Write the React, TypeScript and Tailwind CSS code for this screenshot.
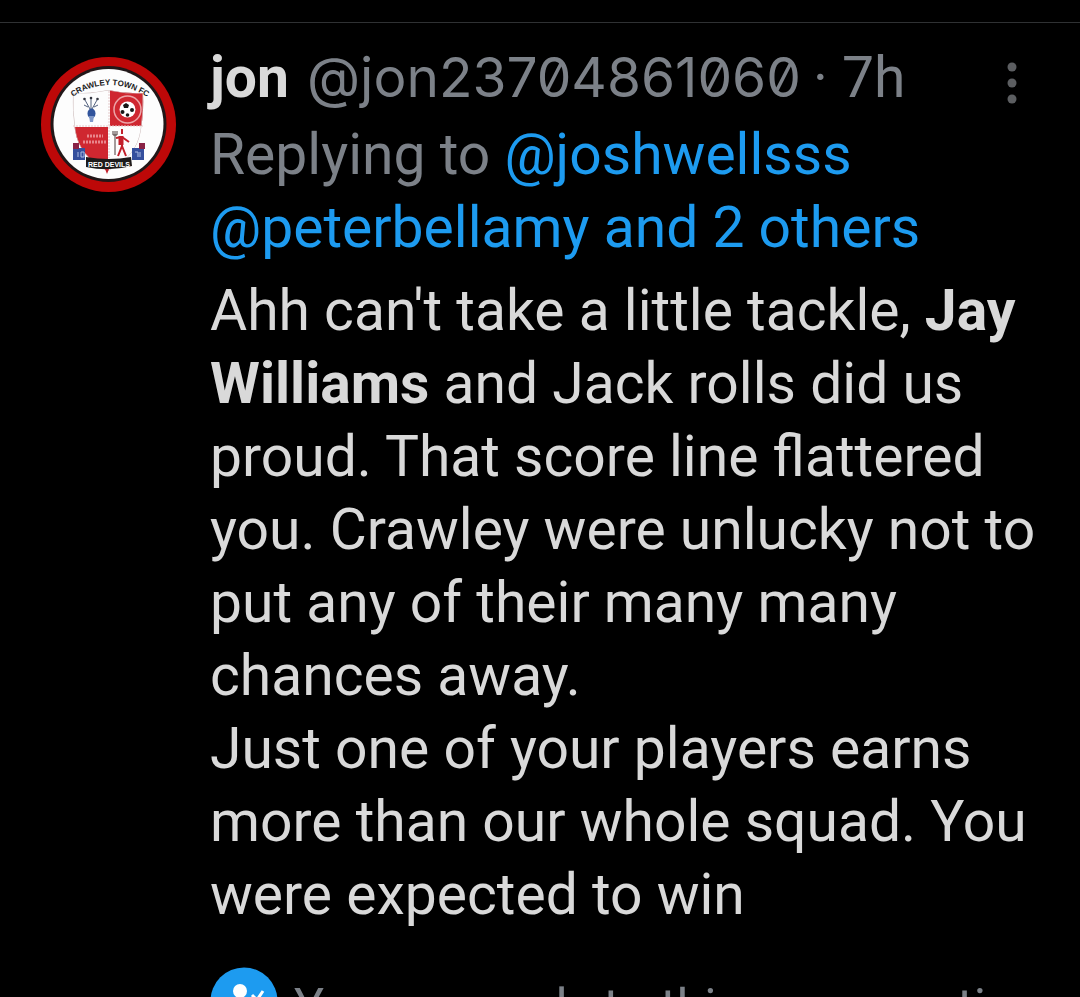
const REPLYING_TO = ['@joshwellsss', '@peterbellamy']

function ClubBadge() {
  return (
    <svg viewBox="0 0 160 160" className="h-40 w-40" role="img" aria-label="Crawley Town FC">
      <defs>
        <path id="club-arc" d="M38 55 Q79 25 122 55" />
        <clipPath id="shield">
          <path d="M43 48 Q60 49 78 45 Q96 49 113 48 Q114 65 111 85 Q107 112 78 126 Q49 112 45 85 Q42 65 43 48Z" />
        </clipPath>
      </defs>
      <circle cx="78.500" cy="79.500" r="67.500" fill="#bd0808" />
      <circle cx="78.500" cy="79" r="58" fill="#211718" />
      <circle cx="78.500" cy="79" r="55" fill="#fdfdfd" />
      <g clipPath="url(#shield)">
        <rect x="80" y="44" width="36" height="37" fill="#cf2730" />
        <rect x="42" y="82" width="36" height="48" fill="#cf2730" />
        <path d="M43 48 Q60 49 78 45 Q96 49 113 48 Q114 65 111 85 Q107 112 78 126 Q49 112 45 85 Q42 65 43 48Z" fill="none" stroke="#cdbcbc" strokeWidth="1" />
      </g>
      <path d="M43 81H113M79 46V113" stroke="#e4c9ca" strokeWidth="1" strokeDasharray="2 1" />
      <text fontSize="8" fontWeight="700" fill="#202020" className="font-['Liberation_Sans']">
        <textPath href="#club-arc" startOffset="50%" textAnchor="middle">CRAWLEY TOWN FC</textPath>
      </text>
      {/* blue crest, top left */}
      <g stroke="#53627f" strokeWidth="1" fill="none">
        <path d="M61 66L61 54M60 64L55 55M62 64L67 55M58 62L54 60M64 62L68 60" />
      </g>
      <g fill="#34363f">
        <circle cx="54.500" cy="54" r="1.300" />
        <circle cx="61" cy="53" r="1.300" />
        <circle cx="67.500" cy="54" r="1.300" />
      </g>
      <ellipse cx="61.500" cy="68.500" rx="4" ry="5" fill="#31549c" />
      <path d="M59 71h5l-1 6h-3z" fill="#7f98c8" />
      {/* football, top right */}
      <circle cx="97.500" cy="64.500" r="13.500" fill="none" stroke="#eda5a8" strokeWidth="1.500" />
      <circle cx="97.500" cy="64.500" r="8" fill="#fff" />
      <g fill="#171717">
        <path d="M93 60l3-2 3 2-1 3h-4z" />
        <circle cx="92.500" cy="67" r="2" />
        <circle cx="102" cy="65" r="2" />
        <circle cx="97.500" cy="70" r="1.800" />
      </g>
      {/* motto, bottom left */}
      <path d="M57 91H73M53 97H76" stroke="#e9868c" strokeWidth="3" strokeDasharray="2 1" />
      {/* red devil, bottom right */}
      <g fill="none" stroke="#c3202b" strokeWidth="2">
        <path d="M92 84V89M92 91V101L88 111M92 101L96 111M86 93L92 92L99 97" />
        <path d="M91 91v9" strokeWidth="5" />
      </g>
      <path d="M85 86v24M83 86v4h4v-4" fill="none" stroke="#4a3a3a" strokeWidth="1" />
      {/* ribbon */}
      <path d="M43 103h12v12H43zM102 103h12v12h-12z" fill="#354f9d" />
      <path d="M43 98h6v6h-6zM109 98h6v6h-6z" fill="#8a2346" />
      <path d="M48 107v5M51 107h3v5h-3zM105 107h3v5M110 107v5" fill="none" stroke="#aebde2" strokeWidth="1" />
      <path d="M56 112Q79 116 101 112L102 121Q79 127 56 122Z" fill="#1d1b1b" />
      <path d="M75 124h4l-2 5z" fill="#c3202b" />
      <text x="79" y="122" textAnchor="middle" fontSize="7" fontWeight="700" fill="#fff" className="font-['Liberation_Sans']">
        RED DEVILS
      </text>
    </svg>
  )
}

function MoreIcon() {
  return (
    <svg viewBox="0 0 16 48" className="h-12 w-4 fill-[#5c5e61]" aria-hidden="true">
      <circle cx="8" cy="8" r="4.500" />
      <circle cx="8" cy="24" r="4.500" />
      <circle cx="8" cy="40" r="4.500" />
    </svg>
  )
}

function CanReplyIcon() {
  return (
    <svg viewBox="0 0 68 68" className="h-17 w-17 shrink-0" aria-hidden="true">
      <circle cx="34" cy="34" r="33.500" fill="#1d9bf0" />
      <circle cx="30" cy="24" r="7" fill="#fff" />
      <path d="M17 49c0-9 6-14 14-14s14 5 14 14z" fill="#fff" />
      <path d="M42 28l5 5 6-9" fill="none" stroke="#fff" strokeWidth="3" />
    </svg>
  )
}

export default function App() {
  return (
    <main className="h-screen overflow-hidden bg-black pt-[22px] font-[Roboto,sans-serif] text-[57px] leading-[73px] text-[#d9d9d9]">
      <article className="flex border-t border-[#2f3133] pr-8 pl-[30px]">
        <a href="#profile" className="mt-[22px] mr-5 h-40 w-40 shrink-0">
          <ClubBadge />
        </a>

        <div className="min-w-0 flex-1 pt-[18px]">
          <header className="flex items-start justify-between">
            <div className="flex gap-3 whitespace-nowrap text-[#7c8188]">
              <a href="#profile" className="mr-1.5 font-bold text-[#d9d9d9]">jon</a>
              <span className="font-[Inter,sans-serif] text-[55px] slashed-zero">@jon23704861060</span>
              <span>· 7h</span>
            </div>
            <button type="button" aria-label="More" className="mt-[18px] mr-7">
              <MoreIcon />
            </button>
          </header>

          <p className="mt-1 text-[#7c8188]">
            Replying to{' '}
            <a href="#replies" className="text-[#1d9bf0]">
              {REPLYING_TO.join(' ')} and 2 others
            </a>
          </p>

          <p className="mt-2.5 whitespace-pre-line">
            Ahh can't take a little tackle, <strong className="font-bold">Jay Williams</strong> and Jack rolls did us
            proud. That score line flattered you. Crawley were unlucky not to put any of their many many chances away.
            {'\n'}
            Just one of your players earns more than our whole squad. You were expected to win
          </p>

          <div className="mt-9 flex gap-4 whitespace-nowrap text-[50px] text-[#7c8188]">
            <CanReplyIcon />
            <span className="pt-1">You can reply to this conversation</span>
          </div>
        </div>
      </article>
    </main>
  )
}
